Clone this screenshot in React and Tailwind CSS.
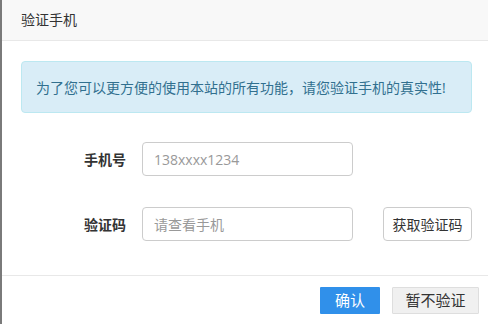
import React from 'react';

const font = { fontFamily: '"Open Sans", "Noto Sans CJK SC", sans-serif' };

export default function App() {
    return (
        <div className="w-[488px] h-[324px] flex bg-white overflow-hidden text-[14px] text-[#333]" style={font}>
            {/* 背景页面的边缘 */}
            <div className="w-[2px] shrink-0 bg-[#7a7a7a]" />

            <div className="flex-1 flex flex-col">
                {/* 标题栏 */}
                <div className="h-[41px] shrink-0 flex items-center px-[19px] bg-[#f8f8f8] border-b border-[#e8e8e8]">
                    <span className="leading-none">验证手机</span>
                </div>

                {/* 内容 */}
                <div className="px-[19px] pt-[20px] h-[235px] shrink-0 border-b border-[#e8e8e8]">
                    <div className="h-[52px] flex items-center px-[14px] rounded-[4px] bg-[#d9edf7] border border-[#bce8f1] text-[#31708f] whitespace-nowrap overflow-hidden">
                        为了您可以更方便的使用本站的所有功能，请您验证手机的真实性!
                    </div>

                    <div className="mt-[29px] flex items-center">
                        <label className="w-[105px] text-right font-bold">手机号</label>
                        <input
                            className="ml-[16px] w-[211px] h-[34px] px-[11px] border border-[#ccc] rounded-[4px] outline-none placeholder:text-[#999]"
                            placeholder="138xxxx1234"
                        />
                    </div>

                    <div className="mt-[31px] flex items-center">
                        <label className="w-[105px] text-right font-bold">验证码</label>
                        <input
                            className="ml-[16px] w-[211px] h-[34px] px-[11px] border border-[#ccc] rounded-[4px] outline-none placeholder:text-[#999]"
                            placeholder="请查看手机"
                        />
                        <button className="ml-[30px] w-[89px] h-[34px] border border-[#ccc] rounded-[4px] bg-white text-[#333]">
                            获取验证码
                        </button>
                    </div>
                </div>

                {/* 底部按钮 */}
                <div className="flex justify-end items-start pt-[11px] pr-[12px] gap-[12px]">
                    <button className="w-[60px] h-[27px] bg-[#3090ea] text-white text-[15px] rounded-[1px]">确认</button>
                    <button className="w-[87px] h-[27px] bg-[#f0f0f0] border border-[#dedede] text-[#333] text-[15px] rounded-[1px]">暂不验证</button>
                </div>
            </div>
        </div>
    );
}
